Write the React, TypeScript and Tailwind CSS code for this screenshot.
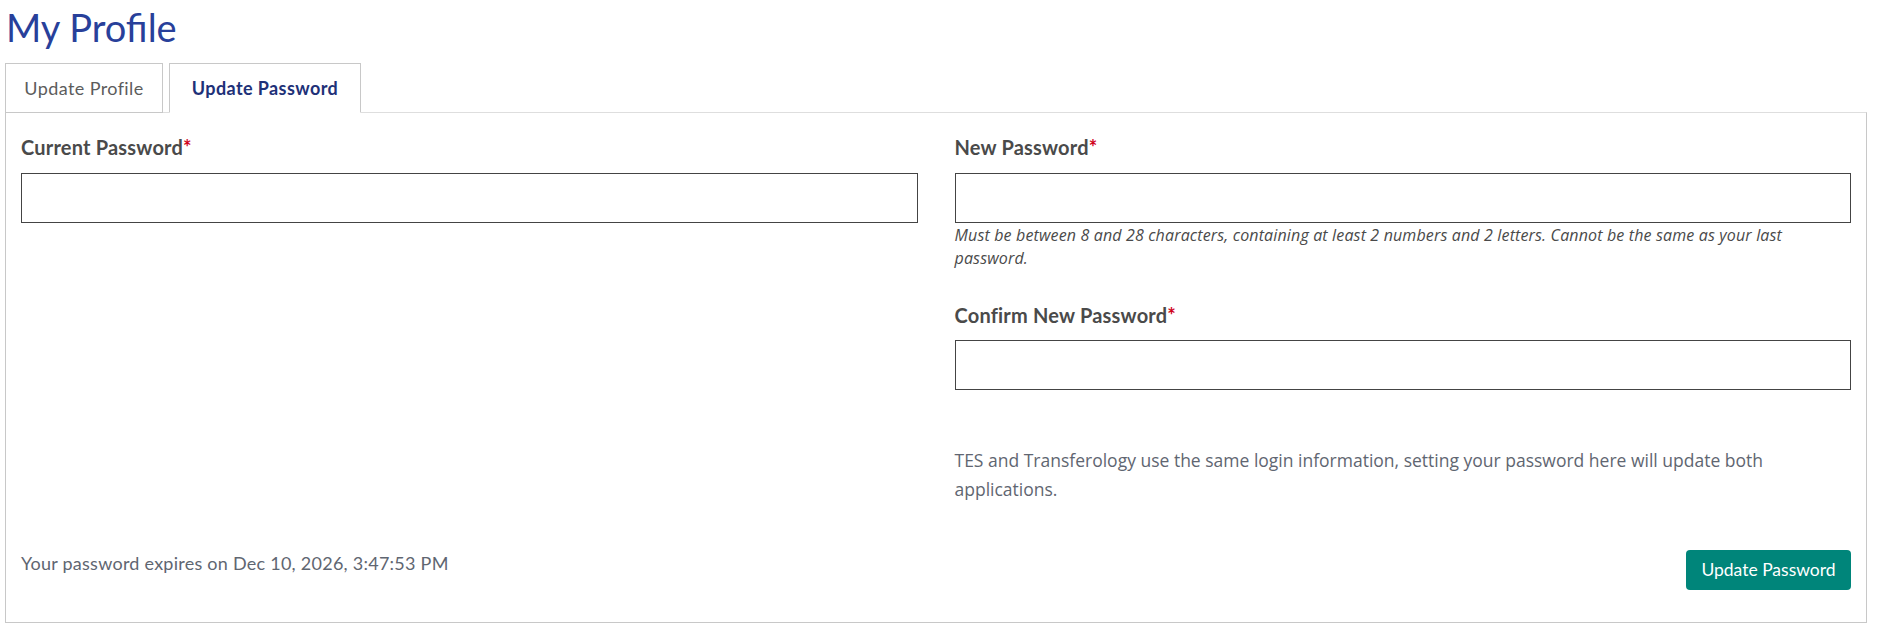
import React, { useState } from 'react';

const font = { fontFamily: 'Lato, "Liberation Sans", sans-serif' };
const openSans = { fontFamily: '"Open Sans", "Liberation Sans", sans-serif' };

const Label: React.FC<{ text: string }> = ({ text }) => (
  <label className="block text-[20px] leading-[24px] tracking-[0.2px] font-bold text-[#4a4a4a]">
    {text}
    <span className="text-[#d0021b]">*</span>
  </label>
);

const PasswordInput: React.FC = () => (
  <input
    type="password"
    className="block w-full h-[50px] border border-[#444] bg-white px-3 outline-none"
  />
);

const App: React.FC = () => {
  const [tab, setTab] = useState<'profile' | 'password'>('password');

  const tabs: { label: string; id: 'profile' | 'password'; width: string }[] = [
    { label: 'Update Profile', id: 'profile', width: 'w-[158px]' },
    { label: 'Update Password', id: 'password', width: 'w-[192px]' },
  ];

  return (
    <div className="w-full h-[629px] bg-white" style={font}>
      <h1 className="pl-[6px] h-[63px] pt-[2px] text-[38px] leading-[50px] text-[#28409a]">My Profile</h1>

      {/* Tabs */}
      <div className="flex gap-[6px] ml-[5px] relative z-10">
        {tabs.map((t) => (
          <button
            key={t.id}
            onClick={() => setTab(t.id)}
            className={`${t.width} h-[50px] border border-[#c8c8c8] bg-white text-[18px] tracking-[0.4px] ${
              tab === t.id ? 'border-b-white font-bold text-[#1e3178]' : 'h-[49px] text-[#5c5c5c]'
            }`}
          >
            {t.label}
          </button>
        ))}
      </div>

      {/* Panel */}
      <div className="ml-[5px] w-[1862px] h-[511px] -mt-[1px] border border-[#c8c8c8] border-t-[#dedede] px-[15px] pt-[22px] flex flex-col">
        <div className="grid grid-cols-2 gap-x-[37px]">
          <div>
            <Label text="Current Password" />
            <div className="mt-[14px]">
              <PasswordInput />
            </div>
          </div>

          <div>
            <Label text="New Password" />
            <div className="mt-[14px]">
              <PasswordInput />
            </div>
            <p className="mt-[1px] text-[16px] leading-[23px] tracking-[0.15px] italic text-[#4a4a4a]" style={openSans}>
              Must be between 8 and 28 characters, containing at least 2 numbers and 2 letters. Cannot be the same as your last password.
            </p>

            <div className="mt-[33px]">
              <Label text="Confirm New Password" />
            </div>
            <div className="mt-[13px]">
              <PasswordInput />
            </div>

            <p className="mt-[56px] text-[17.5px] leading-[29px] text-[#5f6671]" style={openSans}>
              TES and Transferology use the same login information, setting your password here will update both applications.
            </p>
          </div>
        </div>

        <div className="flex justify-between items-start mt-[46px]">
          <p className="text-[18px] leading-[24px] tracking-[0.25px] mt-[1px] text-[#5f6671]">
            Your password expires on Dec 10, 2026, 3:47:53 PM
          </p>
          <button className="w-[165px] h-[40px] rounded-[4px] bg-[#00857a] text-white text-[17.5px]">
            Update Password
          </button>
        </div>
      </div>
    </div>
  );
};

export default App;
